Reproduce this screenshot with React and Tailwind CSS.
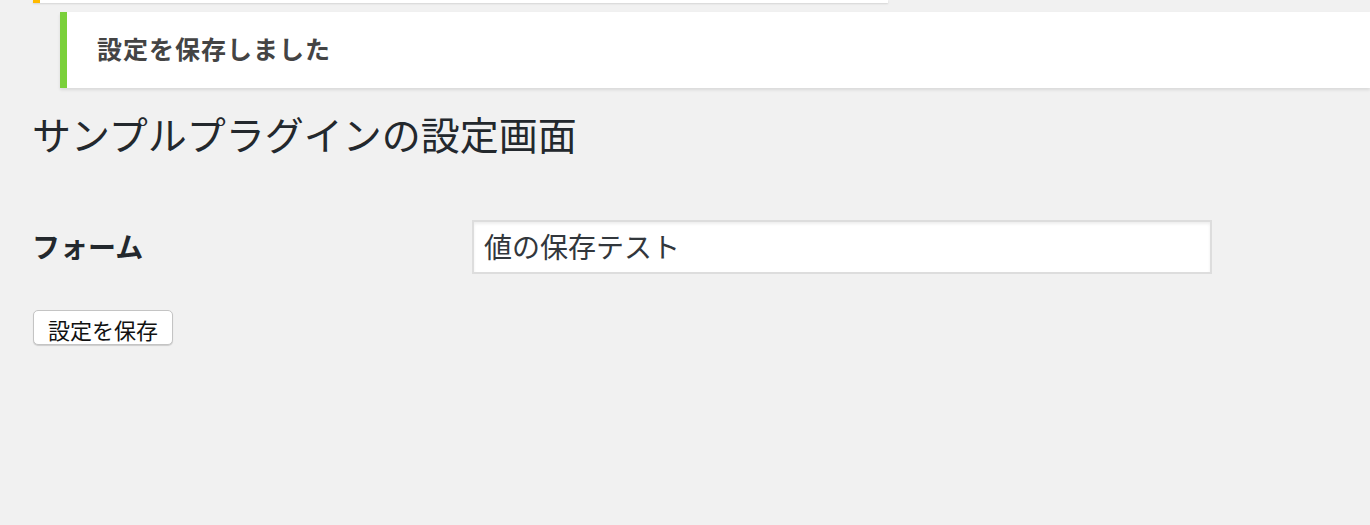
export default function App() {
  const jp = { fontFamily: '"Noto Sans CJK JP", "Noto Sans", sans-serif' };
  return (
    <div className="w-[1370px] h-[525px] overflow-hidden bg-[#f1f1f1]" style={jp}>
      <div className="ml-[33px] w-[855px] h-[3px] bg-white border-l-[7px] border-[#ffba00] shadow-[0_1px_2px_rgba(0,0,0,0.12)]" />
      <div className="mt-[9px] ml-[60px] h-[76px] bg-white border-l-[7px] border-[#7ad03a] shadow-[0_2px_3px_rgba(0,0,0,0.1)] flex items-center pl-[30px] pb-[4px]">
        <p className="text-[25px] tracking-[1px] font-bold text-[#444] leading-none">設定を保存しました</p>
      </div>
      <h1 className="ml-[32px] mt-[20px] text-[39px] font-normal text-[#23282d] leading-[50px]">サンプルプラグインの設定画面</h1>
      <div className="mt-[62px] ml-[32px] flex items-center">
        <label className="w-[440px] text-[28px] font-bold text-[#23282d] leading-none pb-[2px]">フォーム</label>
        <div className="w-[740px] h-[54px] bg-white border-2 border-[#dddddd] shadow-[inset_0_2px_3px_rgba(0,0,0,0.07)] flex items-center pl-[10px] pb-[3px]">
          <span className="text-[28px] text-[#32373c] leading-none">値の保存テスト</span>
        </div>
      </div>
      <div className="mt-[36px] ml-[33px]">
        <button className="w-[140px] h-[35px] bg-white border border-[#c4c4c4] rounded-[5px] shadow-[0_1px_1px_rgba(0,0,0,0.15)] text-[22px] text-[#111] leading-none flex items-center justify-center pt-[2px]">設定を保存</button>
      </div>
    </div>
  );
}
